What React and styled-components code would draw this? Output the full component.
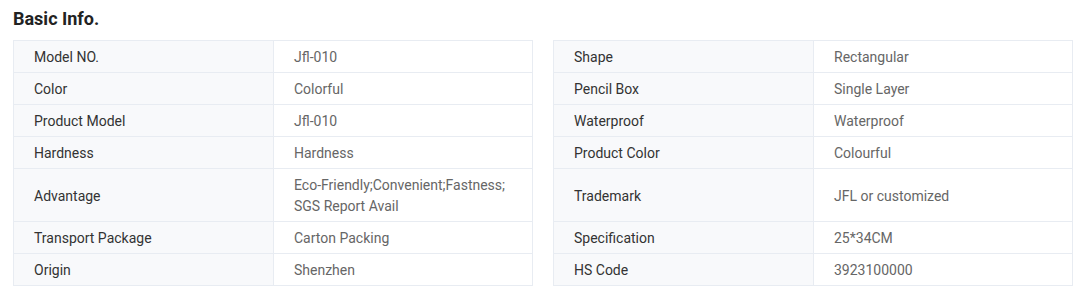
import React from 'react';
import styled, { createGlobalStyle } from 'styled-components';

const GlobalStyle = createGlobalStyle`
  body {
    margin: 0;
    background: #fff;
    font-family: Roboto, "Liberation Sans", Arial, sans-serif;
  }
`;

const left = [
  ['Model NO.', 'Jfl-010'],
  ['Color', 'Colorful'],
  ['Product Model', 'Jfl-010'],
  ['Hardness', 'Hardness'],
  ['Advantage', 'Eco-Friendly;Convenient;Fastness; SGS Report Avail'],
  ['Transport Package', 'Carton Packing'],
  ['Origin', 'Shenzhen'],
];

const right = [
  ['Shape', 'Rectangular'],
  ['Pencil Box', 'Single Layer'],
  ['Waterproof', 'Waterproof'],
  ['Product Color', 'Colourful'],
  ['Trademark', 'JFL or customized'],
  ['Specification', '25*34CM'],
  ['HS Code', '3923100000'],
];

// both tables share one grid so paired rows get the same height
export default function App() {
  return (
    <Page>
      <GlobalStyle />
      <Title>Basic Info.</Title>
      <Tables>
        {left.map((l, i) =>
          [l, right[i]].map(([k, v]) => (
            <Row key={k} first={i === 0}>
              <Label>{k}</Label>
              <Value>{v}</Value>
            </Row>
          ))
        )}
      </Tables>
    </Page>
  );
}

const Page = styled.div`
  padding: 7px 10px 0 13px;
`;

const Title = styled.h2`
  margin: 0 0 9px;
  font-size: 18px;
  line-height: 24px;
  font-weight: 700;
  color: #222;
`;

const Tables = styled.div`
  display: grid;
  grid-template-columns: 520px 520px;
  column-gap: 20px;
`;

const Row = styled.div`
  display: grid;
  grid-template-columns: 260px 1fr;
  border: 1px solid #e8ecf2;
  border-top: ${(p) => (p.first ? '1px solid #e8ecf2' : 'none')};
`;

const Cell = styled.div`
  display: flex;
  align-items: center;
  padding: 6px 20px 4px;
  font-size: 14px;
  line-height: 21px;
`;

const Label = styled(Cell)`
  background: #f8f9fb;
  border-right: 1px solid #e8ecf2;
  color: #333;
`;

const Value = styled(Cell)`
  color: #666;
`;
